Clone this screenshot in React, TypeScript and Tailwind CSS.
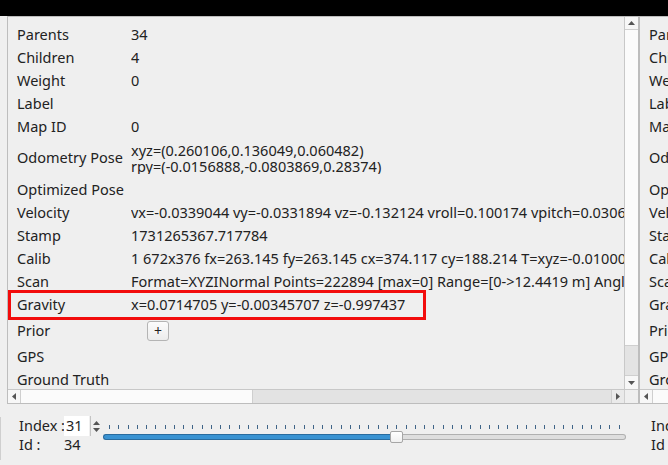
import React from 'react';

type Row = { label: string; value?: React.ReactNode; h: string };

const rows: Row[] = [
  { label: 'Parents', value: '34', h: 'h-[23px]' },
  { label: 'Children', value: '4', h: 'h-[23px]' },
  { label: 'Weight', value: '0', h: 'h-[23px]' },
  { label: 'Label', value: '', h: 'h-[23px]' },
  { label: 'Map ID', value: '0', h: 'h-[23px]' },
  {
    label: 'Odometry Pose',
    value: (
      <div className="flex flex-col leading-[16px]">
        <span>xyz=(0.260106,0.136049,0.060482)</span>
        <span>rpy=(-0.0156888,-0.0803869,0.28374)</span>
      </div>
    ),
    h: 'h-[40px]',
  },
  { label: 'Optimized Pose', value: '', h: 'h-[23px]' },
  {
    label: 'Velocity',
    value: 'vx=-0.0339044 vy=-0.0331894 vz=-0.132124 vroll=0.100174 vpitch=0.0306728 vyaw=-0.0201467',
    h: 'h-[23px]',
  },
  { label: 'Stamp', value: '1731265367.717784', h: 'h-[23px]' },
  {
    label: 'Calib',
    value: '1 672x376 fx=263.145 fy=263.145 cx=374.117 cy=188.214 T=xyz=-0.010000,0.000000,0.000000',
    h: 'h-[23px]',
  },
  {
    label: 'Scan',
    value: 'Format=XYZINormal Points=222894 [max=0] Range=[0->12.4419 m] Angle=[0.000000->0.000000 rad inc=0.000000]',
    h: 'h-[23px]',
  },
  { label: 'Gravity', value: 'x=0.0714705 y=-0.00345707 z=-0.997437', h: 'h-[23px]' },
  {
    label: 'Prior',
    value: (
      <div className="ml-[16px] flex h-[20px] w-[22px] items-center justify-center rounded-[3px] border border-[#b4b4b4] bg-gradient-to-b from-[#fcfcfc] to-[#ececec] text-[14px] leading-none">
        +
      </div>
    ),
    h: 'h-[30px]',
  },
  { label: 'GPS', value: '', h: 'h-[22px]' },
  { label: 'Ground Truth', value: '', h: 'h-[23px]' },
];

function Tri({ dir }: { dir: 'up' | 'down' | 'left' | 'right' }) {
  const vert = dir === 'up' || dir === 'down';
  const w = vert ? 7 : 4;
  const h = vert ? 4 : 7;
  const pts = {
    up: '0,4 7,4 3.5,0',
    down: '0,0 7,0 3.5,4',
    left: '4,0 4,7 0,3.5',
    right: '0,0 0,7 4,3.5',
  }[dir];
  return (
    <svg width={w} height={h} viewBox={`0 0 ${w} ${h}`}>
      <polygon points={pts} fill="#555555" />
    </svg>
  );
}

function Rows({ labelsOnly = false }: { labelsOnly?: boolean }) {
  return (
    <div className="flex flex-col pl-[9px] pt-[6px]">
      {rows.map((r) => (
        <div key={r.label} className={`flex shrink-0 items-center whitespace-nowrap ${r.h}`}>
          <div className={labelsOnly ? 'shrink-0' : 'w-[114px] shrink-0'}>{r.label}</div>
          {!labelsOnly && (
            <div className="flex min-w-0 flex-1 items-center overflow-hidden">{r.value}</div>
          )}
        </div>
      ))}
    </div>
  );
}

function VScroll() {
  return (
    <div className="flex w-[14px] shrink-0 flex-col border-l border-[#c8c8c8]">
      <div className="flex h-[13px] items-center justify-center border-b border-[#cfcfcf] bg-[#f7f7f7]">
        <Tri dir="up" />
      </div>
      <div className="h-[316px] border-b border-[#cfcfcf] bg-[#fbfbfb]" />
      <div className="flex-1 bg-[#e3e3e3]" />
      <div className="flex h-[14px] items-center justify-center border-t border-[#cfcfcf] bg-[#f7f7f7]">
        <Tri dir="down" />
      </div>
    </div>
  );
}

function HScroll() {
  return (
    <div className="flex h-[14px] shrink-0 border-t border-[#c8c8c8]">
      <div className="flex w-[13px] items-center justify-center border-r border-[#cfcfcf] bg-[#f7f7f7]">
        <Tri dir="left" />
      </div>
      <div className="w-[232px] border-r border-[#cfcfcf] bg-[#fbfbfb]" />
      <div className="flex-1 bg-[#e3e3e3]" />
      <div className="flex w-[13px] items-center justify-center border-l border-[#cfcfcf] bg-[#eaeaea]">
        <Tri dir="right" />
      </div>
      <div className="w-[14px] border-l border-[#cfcfcf] bg-[#efefef]" />
    </div>
  );
}

function Slider() {
  const ticks = Array.from({ length: 56 }, (_, i) => i);
  return (
    <div className="relative ml-[1px] mt-[8px] h-[22px] w-[523px]">
      <div className="absolute left-[6px] right-[6px] top-[1px] flex h-[4px] justify-between">
        {ticks.map((t) => (
          <div key={t} className="h-[4px] w-[1px] bg-[#3f6487]" />
        ))}
      </div>
      <div className="absolute left-0 right-0 top-[10px] flex h-[6px]">
        <div className="w-[290px] rounded-l-[3px] border border-r-0 border-[#2a6c9e] bg-[#3a93d2]" />
        <div className="flex-1 rounded-r-[3px] border border-l-0 border-[#b0b0b0] bg-[#dedede]" />
      </div>
      <div className="absolute left-[287px] top-[7px] h-[12px] w-[13px] rounded-[2px] border border-[#a6a6a6] bg-gradient-to-b from-[#ffffff] to-[#f0f0f0]" />
    </div>
  );
}

export default function App() {
  return (
    <div className="flex h-[465px] w-[668px] flex-col overflow-hidden bg-[#efefef] font-['Noto_Sans',sans-serif] text-[14.5px] text-[#222222]">
      <div className="h-[16px] shrink-0 bg-black" />
      <div className="flex min-h-0 flex-1">
        {/* Column A */}
        <div className="flex w-[639px] shrink-0 flex-col">
          <div className="ml-[7px] flex h-[388px] w-[632px] shrink-0 flex-col border border-[#bdbdbd]">
            <div className="flex min-h-0 flex-1">
              <div className="relative min-w-0 flex-1 overflow-hidden">
                <Rows />
                <div className="absolute left-0 top-[273px] h-[30px] w-[418px] border-[3px] border-[#f20c0c]" />
              </div>
              <VScroll />
            </div>
            <HScroll />
          </div>
          <div className="flex flex-1">
            <div className="mt-[13px] h-[43px] w-[1px] bg-[#cfcfcf]" />
            <div className="flex items-start pl-[18px] pt-[12px]">
              <div className="flex flex-col">
                <div className="flex h-[20px] items-center">
                  <span className="w-[45px] whitespace-nowrap">Index :</span>
                  <div className="flex h-[20px] w-[25px] items-center bg-white pl-[2px]">31</div>
                  <div className="ml-[1px] flex h-[20px] w-[12px] flex-col items-center justify-center gap-[3px] border-l border-[#c4c4c4]">
                    <Tri dir="up" />
                    <Tri dir="down" />
                  </div>
                </div>
                <div className="flex h-[17px] items-center">
                  <span className="w-[45px] whitespace-nowrap">Id :</span>
                  <span>34</span>
                </div>
              </div>
              <Slider />
            </div>
          </div>
        </div>
        {/* Column B */}
        <div className="flex min-w-0 flex-1 flex-col overflow-hidden">
          <div className="flex h-[388px] w-[300px] shrink-0 flex-col border border-[#bdbdbd]">
            <div className="min-h-0 flex-1 overflow-hidden">
              <Rows labelsOnly />
            </div>
            <div className="flex h-[14px] shrink-0 border-t border-[#c8c8c8]">
              <div className="flex w-[13px] items-center justify-center border-r border-[#cfcfcf] bg-[#f7f7f7]">
                <Tri dir="left" />
              </div>
              <div className="flex-1 bg-[#fbfbfb]" />
            </div>
          </div>
          <div className="flex flex-col pl-[12px] pt-[12px]">
            <div className="flex h-[20px] items-center whitespace-nowrap">Index :</div>
            <div className="flex h-[17px] items-center whitespace-nowrap">Id :</div>
          </div>
        </div>
      </div>
    </div>
  );
}
